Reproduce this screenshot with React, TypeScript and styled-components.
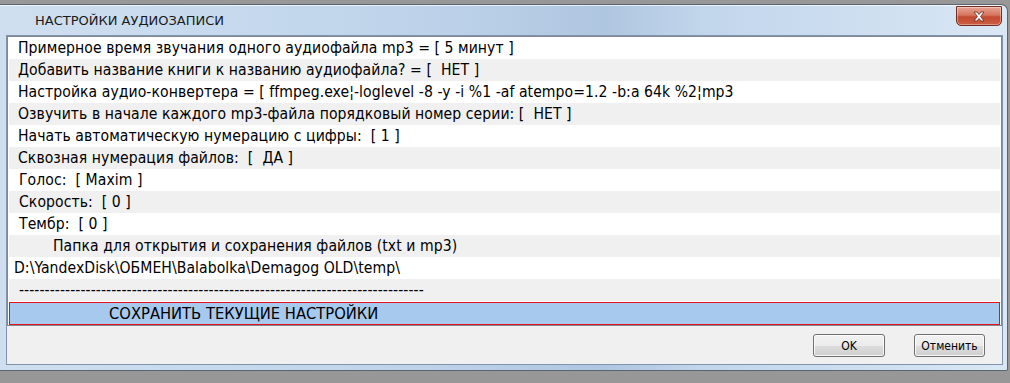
import * as React from 'react';
import styled, { createGlobalStyle } from 'styled-components';

const uiFont = `"DejaVu Sans Condensed", "DejaVu Sans", sans-serif`;

const GlobalStyle = createGlobalStyle`
  html, body {
    margin: 0;
    padding: 0;
    width: 1010px;
    height: 383px;
    overflow: hidden;
    background: repeating-linear-gradient(0deg, #8c8c8c 0px, #a3a3a3 1px, #8c8c8c 2px);
  }
  #root {
    padding-top: 4px;
  }
`;

const Window = styled.div`
  width: 1008px;
  height: 367px;
  box-sizing: border-box;
  border: 1px solid #5a6470;
  border-left: none;
  border-radius: 0 7px 2px 0;
  background: linear-gradient(90deg, #cfdff0 0%, #c3d7ec 30%, #bcd1e9 45%, #afc6e0 60%, #c2d6ec 70%, #cddef0 85%, #dae7f4 100%);
  display: flex;
  flex-direction: column;
  padding: 0 4px 5px 6px;
  box-shadow: inset 0 1px 0 rgba(255, 255, 255, 0.7);
`;

const TitleBar = styled.div`
  height: 30px;
  display: flex;
  align-items: flex-start;
`;

const Title = styled.div`
  font-family: "DejaVu Sans", sans-serif;
  font-size: 13px;
  color: #1a1a1a;
  padding: 8px 0 0 29px;
  flex: 1;
`;

const CloseButton = styled.div`
  width: 46px;
  height: 20px;
  margin: 1px 1px 0 0;
  box-sizing: border-box;
  border: 1px solid #6e2e22;
  border-radius: 0 0 5px 5px;
  background: linear-gradient(180deg, #e8a493 0%, #d7755f 45%, #c24a32 55%, #cd5d40 100%);
  box-shadow: inset 0 0 0 1px rgba(255, 255, 255, 0.35);
  display: flex;
  align-items: center;
  justify-content: center;
`;

const Client = styled.div`
  flex: 1;
  background: #f0f0f0;
  border: 1px solid #8194ad;
  display: flex;
  flex-direction: column;
`;

const List = styled.div`
  border: 1px solid #828790;
  background: #fff;
  display: flex;
  flex-direction: column;
  height: 290px;
  box-sizing: border-box;
  padding: 0 1px 0 1px;
`;

const Row = styled.div<{ $shade?: boolean; $indent?: number }>`
  height: 22px;
  flex-shrink: 0;
  display: flex;
  align-items: center;
  padding-left: ${p => p.$indent ?? 9}px;
  background: ${p => (p.$shade ? '#f0f0f0' : '#ffffff')};
  font-family: ${uiFont};
  font-size: 15.6px;
  letter-spacing: 0.06px;
  color: #000;
  white-space: pre;
`;

const SaveRow = styled.div`
  height: 23px;
  margin-top: 1px;
  box-sizing: border-box;
  border: 1px solid #e8101a;
  background: #a8c9ee;
  display: flex;
  align-items: center;
  padding-left: 99px;
  font-family: "Liberation Sans Narrow", "DejaVu Sans Condensed", sans-serif;
  font-size: 16.4px;
  color: #000;
  white-space: pre;
`;

const Footer = styled.div`
  flex: 1;
  display: flex;
  justify-content: flex-end;
  align-items: flex-start;
  gap: 29px;
  padding: 8px 17px 0 0;
`;

const Button = styled.div<{ $w: number }>`
  width: ${p => p.$w}px;
  height: 23px;
  box-sizing: border-box;
  border: 1px solid #707070;
  border-radius: 3px;
  background: linear-gradient(180deg, #f2f2f2 0%, #ebebeb 50%, #dddddd 51%, #cfcfcf 100%);
  box-shadow: inset 0 0 0 1px rgba(255, 255, 255, 0.8);
  display: flex;
  align-items: center;
  justify-content: center;
  font-family: ${uiFont};
  font-size: 12px;
  color: #000;
`;

const rows: { text: string; indent?: number }[] = [
  { text: 'Примерное время звучания одного аудиофайла mp3 = [ 5 минут ]' },
  { text: 'Добавить название книги к названию аудиофайла? = [  НЕТ ]' },
  { text: 'Настройка аудио-конвертера = [ ffmpeg.exe¦-loglevel -8 -y -i %1 -af atempo=1.2 -b:a 64k %2¦mp3' },
  { text: 'Озвучить в начале каждого mp3-файла порядковый номер серии: [  НЕТ ]' },
  { text: 'Начать автоматическую нумерацию с цифры:  [ 1 ]' },
  { text: 'Сквозная нумерация файлов:  [  ДА ]' },
  { text: 'Голос:  [ Maxim ]', indent: 10 },
  { text: 'Скорость:  [ 0 ]', indent: 10 },
  { text: 'Тембр:  [ 0 ]', indent: 10 },
  { text: 'Папка для открытия и сохранения файлов (txt и mp3)', indent: 44 },
  { text: 'D:\\YandexDisk\\ОБМЕН\\Balabolka\\Demagog OLD\\temp\\', indent: 5 },
  { text: '-'.repeat(79), indent: 10 },
];

export default function App() {
  return (
    <>
      <GlobalStyle />
      <Window>
        <TitleBar>
          <Title>НАСТРОЙКИ АУДИОЗАПИСИ</Title>
          <CloseButton>
            <svg width="14" height="11" viewBox="0 0 14 11">
              <path
                d="M2 1 L5 1 L7 3.5 L9 1 L12 1 L8.6 5.5 L12 10 L9 10 L7 7.5 L5 10 L2 10 L5.4 5.5 Z"
                fill="#fff"
                stroke="#5a2a20"
                strokeWidth="0.8"
              />
            </svg>
          </CloseButton>
        </TitleBar>
        <Client>
          <List>
            {rows.map((r, i) => (
              <Row key={i} $shade={i % 2 === 1} $indent={r.indent}>
                {r.text}
              </Row>
            ))}
            <SaveRow>СОХРАНИТЬ ТЕКУЩИЕ НАСТРОЙКИ</SaveRow>
          </List>
          <Footer>
            <Button $w={72}>OK</Button>
            <Button $w={71}>Отменить</Button>
          </Footer>
        </Client>
      </Window>
    </>
  );
}
